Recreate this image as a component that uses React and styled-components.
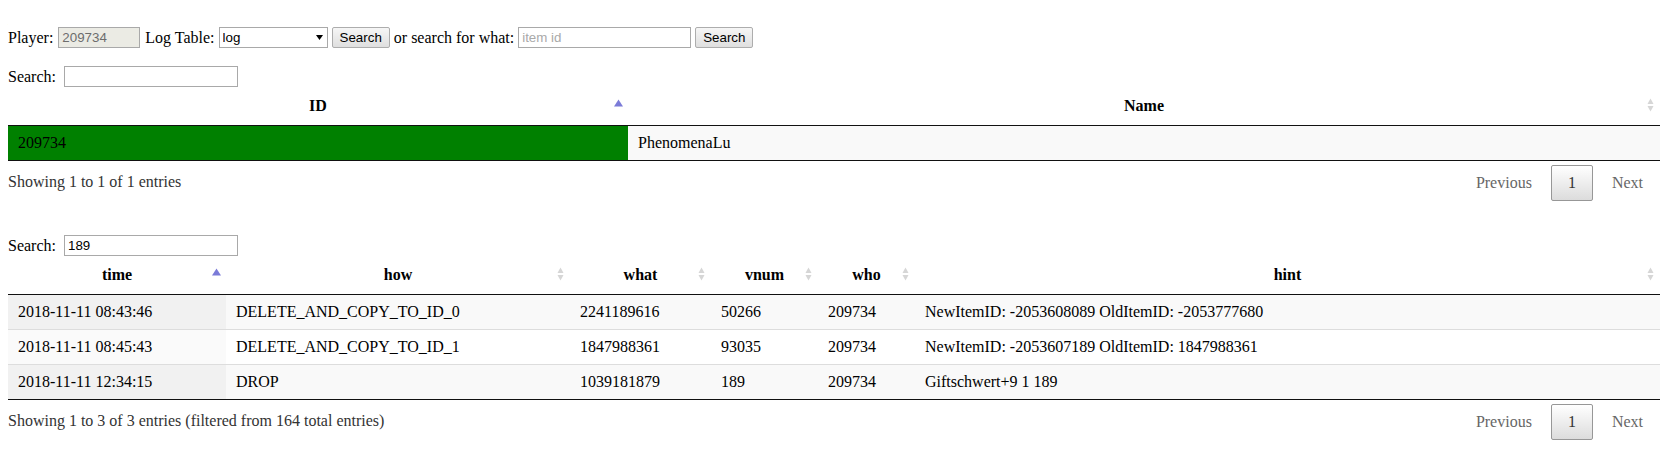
import React from 'react';
import styled, { createGlobalStyle } from 'styled-components';

const GlobalStyle = createGlobalStyle`
  body {
    margin: 8px;
    font-family: "Liberation Serif", "Times New Roman", serif;
    font-size: 16px;
    color: #000;
    background: #fff;
  }
`;

const controlFont = `
  font-family: "Liberation Sans", Arial, sans-serif;
  font-size: 13.33px;
`;

/* top lookup form */
const Toolbar = styled.form`
  display: flex;
  align-items: center;
  gap: 4px;
  height: 21px;
  margin: 19px 0 0;
  white-space: nowrap;
`;

const Label = styled.span`
  margin-left: ${p => p.$ml || 0}px;
`;

const TextInput = styled.input`
  ${controlFont}
  box-sizing: border-box;
  width: ${p => p.$w}px;
  height: 21px;
  margin: 0 0 0 ${p => p.$ml || 0}px;
  padding: 1px 3px;
  border: 1px solid #a9a9a9;
  border-radius: 0;
  outline: none;
  background: ${p => (p.$locked ? '#ebebe4' : '#fff')};
  color: ${p => (p.$locked ? '#6d6d6d' : '#000')};
  &::placeholder {
    color: #a9a9a9;
  }
`;

const SelectBox = styled.span`
  position: relative;
  display: inline-block;
  height: 21px;
`;

const Select = styled.select`
  ${controlFont}
  appearance: none;
  box-sizing: border-box;
  width: 109px;
  height: 21px;
  margin: 0;
  padding: 0 18px 0 3px;
  border: 1px solid #a9a9a9;
  border-radius: 0;
  background: #fff;
  color: #000;
`;

const Caret = styled.svg`
  position: absolute;
  right: 5px;
  top: 8px;
  pointer-events: none;
`;

const Button = styled.button`
  ${controlFont}
  box-sizing: border-box;
  height: 21px;
  margin: 0;
  padding: 1px 7px;
  border: 1px solid #adadad;
  border-radius: 2px;
  background: linear-gradient(#f6f6f6, #dfdfdf);
  color: #000;
`;

/* data table */
const Wrapper = styled.div`
  margin-top: ${p => p.$gap}px;
`;

const Filter = styled.label`
  display: flex;
  align-items: center;
  height: 21px;
`;

const Table = styled.table`
  width: 100%;
  table-layout: fixed;
  border-collapse: separate;
  border-spacing: 0;
  border-bottom: 1px solid #111;
`;

const Th = styled.th`
  position: relative;
  box-sizing: border-box;
  width: ${p => p.$w}px;
  padding: 10px 18px;
  border-bottom: 1px solid #111;
  font-weight: bold;
  text-align: center;
  line-height: normal;
`;

const SortIcon = styled.svg`
  position: absolute;
  right: 0;
  top: calc(50% - 9.5px);
`;

const Tr = styled.tr`
  background: ${p => (p.$odd ? '#f9f9f9' : '#fff')};
`;

const Td = styled.td`
  padding: 8px 10px;
  border-top: ${p => (p.$first ? 'none' : '1px solid #ddd')};
  background: ${p => p.$bg || 'transparent'};
  white-space: nowrap;
  overflow: hidden;
`;

const Footer = styled.div`
  display: flex;
  justify-content: space-between;
  align-items: flex-start;
`;

const Info = styled.div`
  padding-top: 12px;
  color: #333;
`;

const Paginate = styled.div`
  display: flex;
  padding-top: 4px;
`;

const PageButton = styled.span`
  box-sizing: border-box;
  min-width: 1.5em;
  margin-left: 2px;
  padding: 8px 16px;
  border: 1px solid ${p => (p.$current ? '#979797' : 'transparent')};
  border-radius: 2px;
  background: ${p => (p.$current ? 'linear-gradient(to bottom, #fff 0%, #dcdcdc 100%)' : 'transparent')};
  color: ${p => (p.$current ? '#333' : '#666')};
  text-align: center;
`;

function SortMark({ dir }) {
  return (
    <SortIcon width="19" height="19" viewBox="0 0 19 19">
      {dir === 'asc' ? (
        <polygon points="5,9.5 14,9.5 9.5,2.5" fill="#7b7bd8" />
      ) : (
        <g fill="#d6d6d6">
          <polygon points="6.5,7 12.5,7 9.5,1.5" />
          <polygon points="6.5,9 12.5,9 9.5,14.5" />
        </g>
      )}
    </SortIcon>
  );
}

function DataTable({ gap, search, columns, rows, info, firstBg }) {
  return (
    <Wrapper $gap={gap}>
      <Filter>
        Search:
        <TextInput type="search" $w={174} $ml={8} defaultValue={search} />
      </Filter>
      <Table>
        <thead>
          <tr>
            {columns.map(c => (
              <Th key={c.title} $w={c.width}>
                {c.title}
                <SortMark dir={c.sort} />
              </Th>
            ))}
          </tr>
        </thead>
        <tbody>
          {rows.map((r, i) => (
            <Tr key={i} $odd={i % 2 === 0}>
              {r.map((cell, j) => (
                <Td
                  key={j}
                  $first={i === 0}
                  $bg={j === 0 ? firstBg || (i % 2 === 0 ? '#f1f1f1' : '#fafafa') : null}
                >
                  {cell}
                </Td>
              ))}
            </Tr>
          ))}
        </tbody>
      </Table>
      <Footer>
        <Info>{info}</Info>
        <Paginate>
          <PageButton>Previous</PageButton>
          <PageButton $current>1</PageButton>
          <PageButton>Next</PageButton>
        </Paginate>
      </Footer>
    </Wrapper>
  );
}

const playerColumns = [
  { title: 'ID', width: 620, sort: 'asc' },
  { title: 'Name', width: 1032, sort: 'both' },
];

const logColumns = [
  { title: 'time', width: 218, sort: 'asc' },
  { title: 'how', width: 344, sort: 'both' },
  { title: 'what', width: 141, sort: 'both' },
  { title: 'vnum', width: 107, sort: 'both' },
  { title: 'who', width: 97, sort: 'both' },
  { title: 'hint', width: 745, sort: 'both' },
];

const logRows = [
  ['2018-11-11 08:43:46', 'DELETE_AND_COPY_TO_ID_0', '2241189616', '50266', '209734', 'NewItemID: -2053608089 OldItemID: -2053777680'],
  ['2018-11-11 08:45:43', 'DELETE_AND_COPY_TO_ID_1', '1847988361', '93035', '209734', 'NewItemID: -2053607189 OldItemID: 1847988361'],
  ['2018-11-11 12:34:15', 'DROP', '1039181879', '189', '209734', 'Giftschwert+9 1 189'],
];

export default function App() {
  return (
    <>
      <GlobalStyle />
      <Toolbar onSubmit={e => e.preventDefault()}>
        <Label>Player:</Label>
        <TextInput $w={82} $ml={1} $locked readOnly defaultValue="209734" />
        <Label $ml={1}>Log Table:</Label>
        <SelectBox>
          <Select defaultValue="log">
            <option value="log">log</option>
          </Select>
          <Caret width="7" height="5" viewBox="0 0 7 5">
            <polygon points="0,0 7,0 3.5,5" fill="#000" />
          </Caret>
        </SelectBox>
        <Button type="button">Search</Button>
        <Label>or search for what:</Label>
        <TextInput $w={173} placeholder="item id" />
        <Button type="button">Search</Button>
      </Toolbar>

      <DataTable
        gap={18}
        search=""
        columns={playerColumns}
        rows={[['209734', 'PhenomenaLu']]}
        firstBg="green"
        info="Showing 1 to 1 of 1 entries"
      />

      <DataTable
        gap={34}
        search="189"
        columns={logColumns}
        rows={logRows}
        info="Showing 1 to 3 of 3 entries (filtered from 164 total entries)"
      />
    </>
  );
}
